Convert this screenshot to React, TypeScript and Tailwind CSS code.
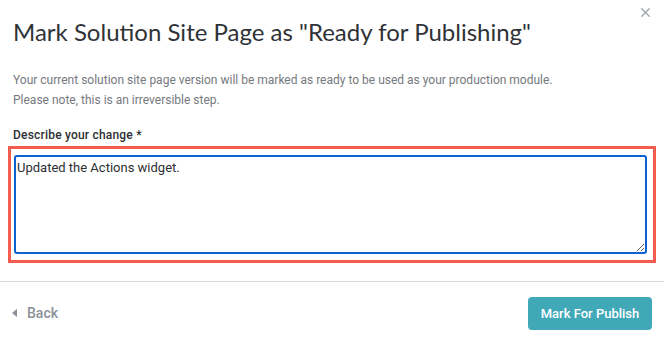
import { X } from 'lucide-react';

const App = () => {
  return (
    <div className="relative h-[338px] w-[664px] overflow-hidden bg-white font-['Roboto',sans-serif]">
      <button className="absolute right-[11px] top-[5px] text-[#9aa1ab]">
        <X size={15} strokeWidth={2} />
      </button>

      <div className="px-[13px] pt-[17px]">
        <h1 className="font-['Lato',sans-serif] text-[24px] leading-[30px] text-[#2f3337]">
          Mark Solution Site Page as "Ready for Publishing"
        </h1>
        <p className="mt-[23px] text-[12px] leading-[20px] text-[#76797e]">
          Your current solution site page version will be marked as ready to be used as your production module.
          <br />
          Please note, this is an irreversible step.
        </p>
        <label className="mt-[17px] block text-[12px] font-medium leading-[16px] tracking-[0.2px] text-[#2c2f33]">
          Describe your change *
        </label>
      </div>

      <div className="mx-[8px] mt-[3px] border-[3px] border-[#f45d4d] pb-[6px] pl-[3px] pt-[6px]">
        <textarea
          defaultValue="Updated the Actions widget."
          className="block h-[99px] w-[633px] resize-y rounded-[3px] border-2 border-[#0b62d0] px-[1px] py-[3px] text-[13px] leading-[16px] text-[#2d2f33] outline-none"
        />
      </div>

      <div className="mt-[18px] flex items-center justify-between border-t border-[#d5d5dc] px-[12px] pt-[15px]">
        <button className="flex items-center gap-[9px] text-[14px] font-medium text-[#8b9099]">
          <svg width="6" height="8" viewBox="0 0 6 8" className="mt-[-1px]">
            <path d="M5 0 L0 4 L5 8 Z" fill="#8b9099" />
          </svg>
          Back
        </button>
        <button className="h-[33px] w-[124px] rounded-[4px] bg-[#41a8b8] text-[13px] font-medium text-white">
          Mark For Publish
        </button>
      </div>
    </div>
  );
};

export default App;
